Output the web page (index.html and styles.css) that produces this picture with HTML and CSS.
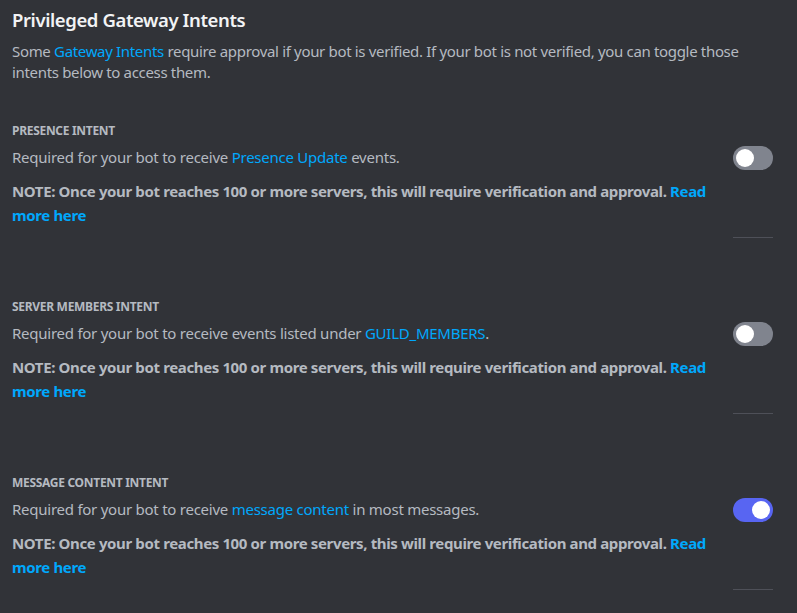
FILE: index.html
```html
<!DOCTYPE html>
<html lang="en">
<head>
  <meta charset="UTF-8" />
  <title>Privileged Gateway Intents</title>
  <link rel="stylesheet" href="styles.css">
</head>
<body>

  <h1>Privileged Gateway Intents</h1>
  <p class="intro">Some <a href="#">Gateway Intents</a> require approval if your bot is verified. If your bot is not verified, you can toggle those intents below to access them.</p>

  <div class="intent">
    <div class="label">Presence Intent</div>
    <div class="row">
      <div class="text">
        <p class="desc">Required for your bot to receive <a href="#">Presence Update</a> events.</p>
        <p class="note">NOTE: Once your bot reaches 100 or more servers, this will require verification and approval. <a href="#">Read more here</a></p>
      </div>
      <div class="toggle"><span class="knob"></span></div>
    </div>
    <div class="divider"></div>
  </div>

  <div class="intent">
    <div class="label">Server Members Intent</div>
    <div class="row">
      <div class="text">
        <p class="desc">Required for your bot to receive events listed under <a href="#">GUILD_MEMBERS</a>.</p>
        <p class="note">NOTE: Once your bot reaches 100 or more servers, this will require verification and approval. <a href="#">Read more here</a></p>
      </div>
      <div class="toggle"><span class="knob"></span></div>
    </div>
    <div class="divider"></div>
  </div>

  <div class="intent">
    <div class="label">Message Content Intent</div>
    <div class="row">
      <div class="text">
        <p class="desc">Required for your bot to receive <a href="#">message content</a> in most messages.</p>
        <p class="note">NOTE: Once your bot reaches 100 or more servers, this will require verification and approval. <a href="#">Read more here</a></p>
      </div>
      <div class="toggle on"><span class="knob"></span></div>
    </div>
    <div class="divider"></div>
  </div>

</body>
</html>
```

FILE: styles.css
```css
body {
  margin: 0;
  padding: 8px 24px 0 12px;
  background: #313338;
  font-family: 'Noto Sans', sans-serif;
  color: #b5bac1;
}

a {
  color: #00a8fc;
  text-decoration: none;
}

h1 {
  margin: 0;
  font-size: 18.5px;
  line-height: 24px;
  font-weight: 600;
  letter-spacing: -0.4px;
  color: #f2f3f5;
}

.intro {
  margin: 9px 0 0 0;
  font-size: 15px;
  line-height: 21px;
  letter-spacing: -0.33px;
}

.intent {
  margin-top: 40px;
}

.intent + .intent {
  margin-top: 61px;
}

.label {
  font-size: 12px;
  line-height: 16px;
  font-weight: 700;
  letter-spacing: -0.3px;
  text-transform: uppercase;
}

.row {
  display: flex;
  align-items: flex-start;
  margin-top: 8px;
}

.text {
  flex: 1;
  padding-right: 12px;
}

.desc {
  margin: 0;
  font-size: 15px;
  line-height: 20px;
  letter-spacing: -0.25px;
}

.note {
  margin: 12px 0 0 0;
  font-size: 15px;
  line-height: 24px;
  font-weight: 700;
  letter-spacing: -0.37px;
}

.toggle {
  flex: none;
  width: 40px;
  height: 24px;
  border-radius: 12px;
  background: #80848e;
  display: flex;
  align-items: center;
  padding: 0 3px;
  box-sizing: border-box;
  margin-top: -1px;
}

.toggle.on {
  background: #5865f2;
  justify-content: flex-end;
}

.knob {
  width: 18px;
  height: 18px;
  border-radius: 50%;
  background: #fff;
}

.divider {
  width: 40px;
  height: 1px;
  margin: 10px 0 0 auto;
  background: #4e5058;
}
```
